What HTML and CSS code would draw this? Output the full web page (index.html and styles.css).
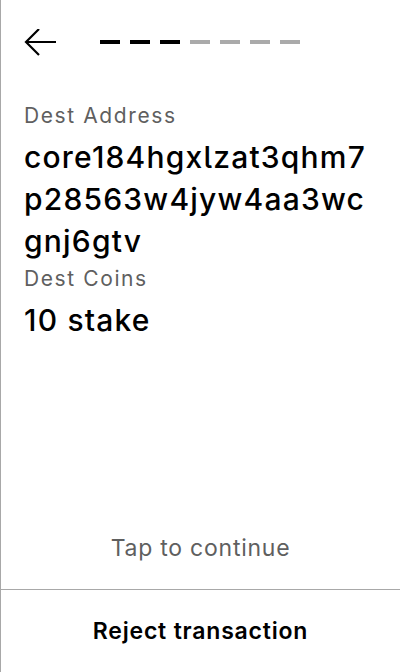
FILE: index.html
```html
<!DOCTYPE html>
<html>
<head>
<meta charset="utf-8">
<link rel="stylesheet" href="styles.css">
</head>
<body>
<div class="screen">
  <header class="header">
    <button class="back" aria-label="Back">
      <svg width="34" height="30" viewBox="0 0 34 30"><path d="M32 13H2M15 0L2 13L15 26" fill="none" stroke="#000" stroke-width="2.2"/></svg>
    </button>
    <div class="steps">
      <span class="step on"></span><span class="step on"></span><span class="step on"></span>
      <span class="step"></span><span class="step"></span><span class="step"></span><span class="step"></span>
    </div>
  </header>
  <main class="content">
    <div class="label first">Dest Address</div>
    <div class="value">core184hgxlzat3qhm7p28563w4jyw4aa3wcgnj6gtv</div>
    <div class="label">Dest Coins</div>
    <div class="value">10 stake</div>
  </main>
  <div class="tap">Tap to continue</div>
  <div class="reject">Reject transaction</div>
</div>
</body>
</html>
```
FILE: styles.css
```css
* { box-sizing: border-box; }
html, body { margin: 0; padding: 0; background: #fff; }
body {
  font-family: Inter, "Noto Sans", sans-serif;
  color: #000;
  font-feature-settings: "cv05" 1;
}
.screen {
  width: 400px;
  height: 672px;
  border-left: 1px solid #a8a8a8;
  display: flex;
  flex-direction: column;
}
.header {
  height: 86px;
  display: flex;
  align-items: center;
  padding-left: 23px;
  padding-bottom: 2px;
  flex: none;
}
.back {
  border: 0;
  background: none;
  padding: 0;
  width: 34px;
  height: 30px;
  display: block;
  margin-top: 4px;
}
.back svg { display: block; }
.steps {
  display: flex;
  gap: 10px;
  margin-left: 42px;
}
.step {
  width: 20px;
  height: 4px;
  background: #aaa;
}
.step.on { background: #000; }
.content {
  padding: 0 23px;
  flex: 1;
}
.label {
  font-size: 21px;
  line-height: 28px;
  letter-spacing: 1.6px;
  color: #5f5f5f;
  margin-top: 3px;
}
.label.first { margin-top: 16px; }
.value {
  font-size: 30px;
  line-height: 42px;
  font-weight: 500;
  letter-spacing: 1.2px;
  word-break: break-all;
  margin-top: 6px;
}
.tap {
  text-align: center;
  font-size: 23px;
  letter-spacing: 0.75px;
  color: #5f5f5f;
  height: 82px;
  line-height: 82px;
  flex: none;
}
.reject {
  border-top: 1px solid #a8a8a8;
  height: 83px;
  display: flex;
  align-items: center;
  justify-content: center;
  font-size: 23px;
  letter-spacing: 0.8px;
  font-weight: 600;
  flex: none;
}
```
